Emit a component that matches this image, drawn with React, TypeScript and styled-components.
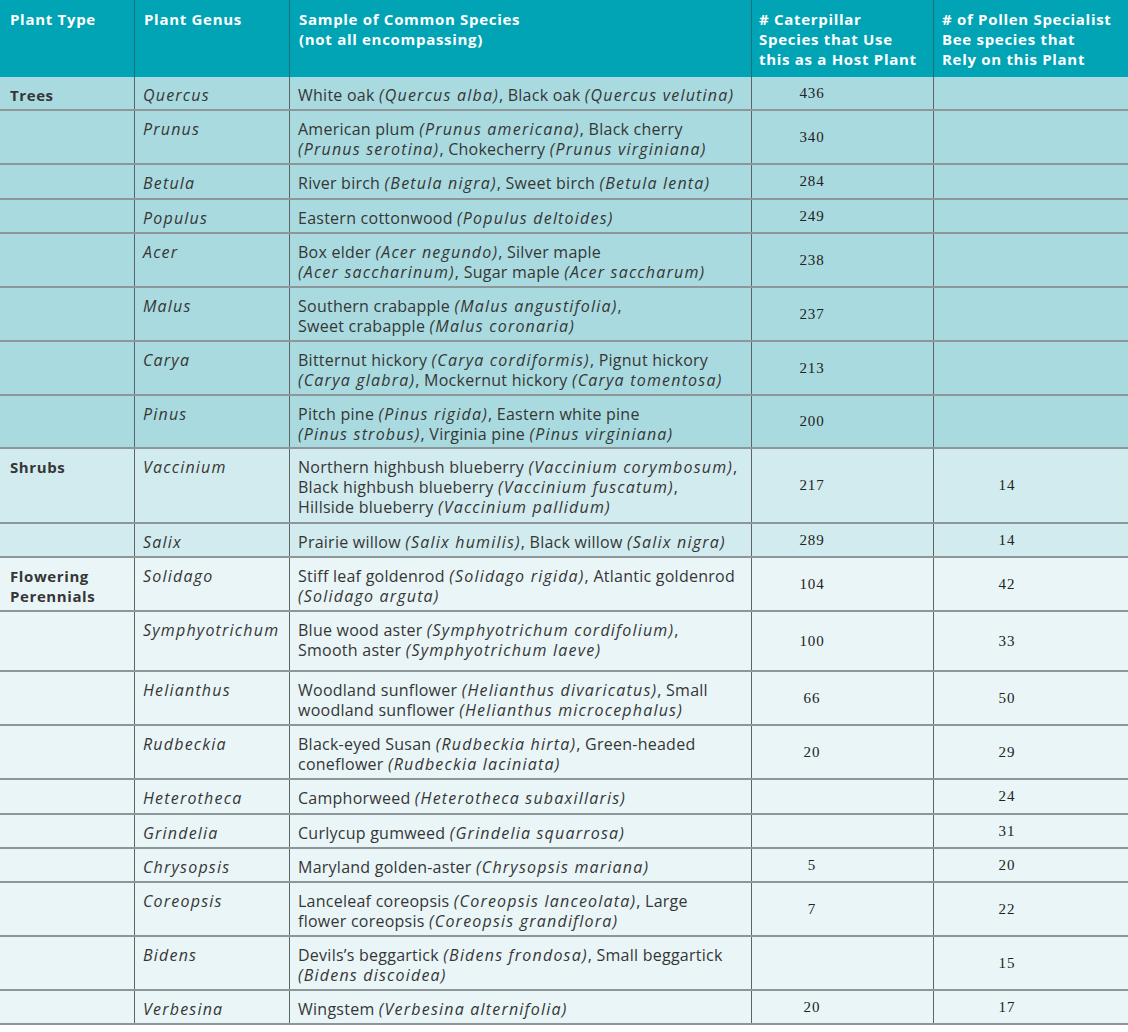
import React from "react";
import styled, { createGlobalStyle } from "styled-components";

const Global = createGlobalStyle`
  html, body { margin: 0; padding: 0; background: #ffffff; }
  body { font-family: "Open Sans", "Noto Sans", sans-serif; }
`;

type Group = "trees" | "shrubs" | "flowers";

const bg: Record<Group, string> = {
  trees: "#a9dadf",
  shrubs: "#d2ebee",
  flowers: "#e9f5f7",
};

const Table = styled.div`
  width: 1128px;
  display: flex;
  flex-direction: column;
`;

const Row = styled.div<{ $h: number; $group?: Group; $head?: boolean }>`
  display: grid;
  grid-template-columns: 135px 155px 462px 182px 194px;
  height: ${(p) => p.$h}px;
  box-sizing: border-box;
  background: ${(p) => (p.$head ? "#00a4b5" : bg[p.$group || "trees"])};
  border-bottom: ${(p) => (p.$head ? "none" : "2px solid #8d9698")};
`;

const HeadCell = styled.div<{ $last?: boolean }>`
  box-sizing: border-box;
  padding: 9px 0 0 ${(p) => (p.$last ? 8 : 9)}px;
  border-right: ${(p) => (p.$last ? "none" : "1px solid #1f6f78")};
  color: #ffffff;
  font-weight: 700;
  font-size: 15px;
  letter-spacing: 0.7px;
  line-height: 20px;
  white-space: nowrap;
  &:first-child { padding-left: 10px; }
  &:nth-child(4) { padding-left: 7px; }
`;

const TextCell = styled.div<{ $first?: boolean; $italic?: boolean; $bold?: boolean }>`
  box-sizing: border-box;
  padding: 8px 0 0 ${(p) => (p.$first ? 10 : 8)}px;
  border-right: 1px solid #5e6466;
  color: #363636;
  font-size: ${(p) => (p.$bold ? 15 : 16)}px;
  line-height: 20px;
  letter-spacing: ${(p) => (p.$bold ? 0.6 : p.$italic ? 1.2 : 0.25)}px;
  font-style: ${(p) => (p.$italic ? "italic" : "normal")};
  font-weight: ${(p) => (p.$bold ? 700 : 400)};
  white-space: nowrap;
`;

const NumCell = styled.div<{ $pr: number; $last?: boolean }>`
  box-sizing: border-box;
  display: flex;
  align-items: center;
  justify-content: center;
  padding-right: ${(p) => p.$pr}px;
  border-right: ${(p) => (p.$last ? "none" : "1px solid #5e6466")};
  font-family: "Liberation Serif", "Times New Roman", serif;
  font-size: 15px;
  letter-spacing: 0.9px;
  color: #222222;
`;

const Line = styled.div`
  display: block;
`;

const Sci = styled.i`
  font-style: italic;
  font-size: 16px;
  letter-spacing: 1.2px;
`;

type Seg = string | { i: string };
type Entry = {
  type?: string;
  genus: string;
  lines: Seg[][];
  cat?: string;
  bee?: string;
  h: number;
  group: Group;
};

const rows: Entry[] = [
  { type: "Trees", genus: "Quercus", lines: [["White oak ", { i: "(Quercus alba)" }, ", Black oak ", { i: "(Quercus velutina)" }]], cat: "436", h: 34, group: "trees" },
  { genus: "Prunus", lines: [["American plum ", { i: "(Prunus americana)" }, ", Black cherry"], [{ i: "(Prunus serotina)" }, ", Chokecherry ", { i: "(Prunus virginiana)" }]], cat: "340", h: 54, group: "trees" },
  { genus: "Betula", lines: [["River birch ", { i: "(Betula nigra)" }, ", Sweet birch ", { i: "(Betula lenta)" }]], cat: "284", h: 35, group: "trees" },
  { genus: "Populus", lines: [["Eastern cottonwood ", { i: "(Populus deltoides)" }]], cat: "249", h: 34, group: "trees" },
  { genus: "Acer", lines: [["Box elder ", { i: "(Acer negundo)" }, ", Silver maple"], [{ i: "(Acer saccharinum)" }, ", Sugar maple ", { i: "(Acer saccharum)" }]], cat: "238", h: 54, group: "trees" },
  { genus: "Malus", lines: [["Southern crabapple ", { i: "(Malus angustifolia)" }, ","], ["Sweet crabapple ", { i: "(Malus coronaria)" }]], cat: "237", h: 54, group: "trees" },
  { genus: "Carya", lines: [["Bitternut hickory ", { i: "(Carya cordiformis)" }, ", Pignut hickory"], [{ i: "(Carya glabra)" }, ", Mockernut hickory ", { i: "(Carya tomentosa)" }]], cat: "213", h: 54, group: "trees" },
  { genus: "Pinus", lines: [["Pitch pine ", { i: "(Pinus rigida)" }, ", Eastern white pine"], [{ i: "(Pinus strobus)" }, ", Virginia pine ", { i: "(Pinus virginiana)" }]], cat: "200", h: 53, group: "trees" },
  { type: "Shrubs", genus: "Vaccinium", lines: [["Northern highbush blueberry ", { i: "(Vaccinium corymbosum)" }, ","], ["Black highbush blueberry ", { i: "(Vaccinium fuscatum)" }, ","], ["Hillside blueberry ", { i: "(Vaccinium pallidum)" }]], cat: "217", bee: "14", h: 75, group: "shrubs" },
  { genus: "Salix", lines: [["Prairie willow ", { i: "(Salix humilis)" }, ", Black willow ", { i: "(Salix nigra)" }]], cat: "289", bee: "14", h: 34, group: "shrubs" },
  { type: "Flowering\nPerennials", genus: "Solidago", lines: [["Stiff leaf goldenrod ", { i: "(Solidago rigida)" }, ", Atlantic goldenrod"], [{ i: "(Solidago arguta)" }]], cat: "104", bee: "42", h: 54, group: "flowers" },
  { genus: "Symphyotrichum", lines: [["Blue wood aster ", { i: "(Symphyotrichum cordifolium)" }, ","], ["Smooth aster ", { i: "(Symphyotrichum laeve)" }]], cat: "100", bee: "33", h: 60, group: "flowers" },
  { genus: "Helianthus", lines: [["Woodland sunflower ", { i: "(Helianthus divaricatus)" }, ", Small"], ["woodland sunflower ", { i: "(Helianthus microcephalus)" }]], cat: "66", bee: "50", h: 54, group: "flowers" },
  { genus: "Rudbeckia", lines: [["Black-eyed Susan ", { i: "(Rudbeckia hirta)" }, ", Green-headed"], ["coneflower ", { i: "(Rudbeckia laciniata)" }]], cat: "20", bee: "29", h: 54, group: "flowers" },
  { genus: "Heterotheca", lines: [["Camphorweed ", { i: "(Heterotheca subaxillaris)" }]], bee: "24", h: 35, group: "flowers" },
  { genus: "Grindelia", lines: [["Curlycup gumweed ", { i: "(Grindelia squarrosa)" }]], bee: "31", h: 34, group: "flowers" },
  { genus: "Chrysopsis", lines: [["Maryland golden-aster ", { i: "(Chrysopsis mariana)" }]], cat: "5", bee: "20", h: 34, group: "flowers" },
  { genus: "Coreopsis", lines: [["Lanceleaf coreopsis ", { i: "(Coreopsis lanceolata)" }, ", Large"], ["flower coreopsis ", { i: "(Coreopsis grandiflora)" }]], cat: "7", bee: "22", h: 54, group: "flowers" },
  { genus: "Bidens", lines: [["Devils’s beggartick ", { i: "(Bidens frondosa)" }, ", Small beggartick"], [{ i: "(Bidens discoidea)" }]], bee: "15", h: 54, group: "flowers" },
  { genus: "Verbesina", lines: [["Wingstem ", { i: "(Verbesina alternifolia)" }]], cat: "20", bee: "17", h: 34, group: "flowers" },
];

const renderSegs = (segs: Seg[]) =>
  segs.map((s, k) =>
    typeof s === "string" ? <React.Fragment key={k}>{s}</React.Fragment> : <Sci key={k}>{s.i}</Sci>
  );

export default function App() {
  return (
    <>
      <Global />
      <Table>
        <Row $h={77} $head>
          <HeadCell>Plant Type</HeadCell>
          <HeadCell>Plant Genus</HeadCell>
          <HeadCell>
            <Line>Sample of Common Species</Line>
            <Line>(not all encompassing)</Line>
          </HeadCell>
          <HeadCell>
            <Line># Caterpillar</Line>
            <Line>Species that Use</Line>
            <Line>this as a Host Plant</Line>
          </HeadCell>
          <HeadCell $last>
            <Line># of Pollen Specialist</Line>
            <Line>Bee species that</Line>
            <Line>Rely on this Plant</Line>
          </HeadCell>
        </Row>
        {rows.map((r, idx) => (
          <Row key={idx} $h={r.h} $group={r.group}>
            <TextCell $first $bold>
              {(r.type || "").split("\n").map((t, k) => (
                <Line key={k}>{t}</Line>
              ))}
            </TextCell>
            <TextCell $italic>{r.genus}</TextCell>
            <TextCell>
              {r.lines.map((l, k) => (
                <Line key={k}>{renderSegs(l)}</Line>
              ))}
            </TextCell>
            <NumCell $pr={61}>{r.cat || ""}</NumCell>
            <NumCell $pr={48} $last>
              {r.bee || ""}
            </NumCell>
          </Row>
        ))}
      </Table>
    </>
  );
}
